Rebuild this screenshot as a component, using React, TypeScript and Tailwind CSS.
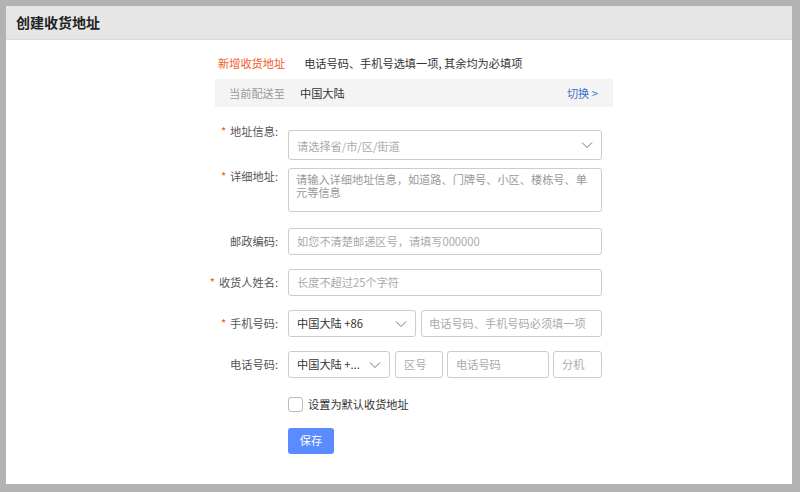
import React from 'react';

const font = { fontFamily: '"Microsoft YaHei", "Noto Sans CJK SC", "Liberation Sans", sans-serif' };

function Chevron({ className = '' }: { className?: string }) {
  return (
    <svg width="12" height="8" viewBox="0 0 12 8" className={className} fill="none">
      <path d="M1 1.5 L6 6.5 L11 1.5" stroke="#777" strokeWidth="1" />
    </svg>
  );
}

function Label({ text, required }: { text: string; required?: boolean }) {
  return (
    <div className="w-[89px] shrink-0 whitespace-nowrap pr-[10px] text-right text-[#555]">
      {required && <span className="mr-[4px] text-[#f25a29]">*</span>}
      {text}:
    </div>
  );
}

export default function App(): React.JSX.Element {
  return (
    <div style={font} className="h-[492px] w-[800px] bg-[#b3b3b3] pl-[6px] pt-[6px] pr-[8px] pb-[8px]">
      <div className="flex h-full flex-col bg-white text-[11.2px]">
        <div className="flex h-[34px] shrink-0 items-center border-b border-[#d9d9d9] bg-[#e6e6e6] pl-[10px] text-[14px] font-bold text-[#222]">
          创建收货地址
        </div>

        <div className="ml-[209px] w-[398px] pt-[12px]">
          <div className="flex h-[22px] items-center whitespace-nowrap">
            <span className="ml-[3px] text-[#f25a29]">新增收货地址</span>
            <span className="ml-[19px] text-[#333]">电话号码、手机号选填一项, 其余均为必填项</span>
          </div>
          <div className="mt-[5px] flex h-[28px] items-center bg-[#f4f4f4] pr-[15px]">
            <span className="ml-[14px] text-[#999]">当前配送至</span>
            <span className="ml-[15px] text-[#333]">中国大陆</span>
            <span className="ml-auto text-[#3b73c9]">切换 &gt;</span>
          </div>
        </div>

        <div className="ml-[193px] mt-[16px] flex flex-col">
          <div className="flex items-start">
            <Label text="地址信息" required />
            <div className="mt-[7px] flex h-[30px] w-[314px] items-center justify-between rounded-[3px] border border-[#ccc] pl-[8px] pr-[8px] text-[#aaa]">
              <span className="mt-[2px]">请选择省/市/区/街道</span>
              <Chevron />
            </div>
          </div>

          <div className="mt-[8px] flex items-start">
            <Label text="详细地址" required />
            <div className="h-[44px] w-[314px] rounded-[3px] border border-[#ccc] px-[7px] pt-[4px] leading-[13px] text-[#999]">
              请输入详细地址信息，如道路、门牌号、小区、楼栋号、单元等信息
            </div>
          </div>

          <div className="mt-[16px] flex items-center">
            <Label text="邮政编码" />
            <div className="flex h-[27px] w-[314px] items-center rounded-[3px] border border-[#ccc] px-[8px] text-[#aaa]">
              如您不清楚邮递区号，请填写000000
            </div>
          </div>

          <div className="mt-[14px] flex items-center">
            <Label text="收货人姓名" required />
            <div className="flex h-[27px] w-[314px] items-center rounded-[3px] border border-[#ccc] px-[8px] text-[#aaa]">
              长度不超过25个字符
            </div>
          </div>

          <div className="mt-[14px] flex items-center">
            <Label text="手机号码" required />
            <div className="flex h-[27px] w-[128px] items-center justify-between rounded-[3px] border border-[#ccc] pl-[8px] pr-[8px] text-[#333]">
              <span>中国大陆 +86</span>
              <Chevron />
            </div>
            <div className="ml-[5px] flex h-[27px] w-[181px] items-center whitespace-nowrap rounded-[3px] border border-[#ccc] px-[7px] text-[#aaa]">
              电话号码、手机号码必须填一项
            </div>
          </div>

          <div className="mt-[14px] flex items-center">
            <Label text="电话号码" />
            <div className="flex h-[27px] w-[102px] items-center justify-between rounded-[3px] border border-[#ccc] pl-[8px] pr-[8px] text-[#333]">
              <span>中国大陆 +...</span>
              <Chevron />
            </div>
            <div className="ml-[5px] flex h-[27px] w-[48px] items-center rounded-[3px] border border-[#ccc] px-[8px] text-[#aaa]">
              区号
            </div>
            <div className="ml-[4px] flex h-[27px] w-[102px] items-center rounded-[3px] border border-[#ccc] px-[8px] text-[#aaa]">
              电话号码
            </div>
            <div className="ml-[4px] flex h-[27px] w-[49px] items-center rounded-[3px] border border-[#ccc] px-[8px] text-[#aaa]">
              分机
            </div>
          </div>

          <div className="ml-[89px] mt-[18px] flex items-center">
            <div className="h-[15px] w-[15px] rounded-[3px] border border-[#bbb] bg-white" />
            <span className="ml-[5px] text-[#333]">设置为默认收货地址</span>
          </div>

          <div className="ml-[89px] mt-[15px]">
            <div className="flex h-[26px] w-[46px] items-center justify-center rounded-[3px] bg-[#5a8cff] text-white">
              保存
            </div>
          </div>
        </div>
      </div>
    </div>
  );
}
